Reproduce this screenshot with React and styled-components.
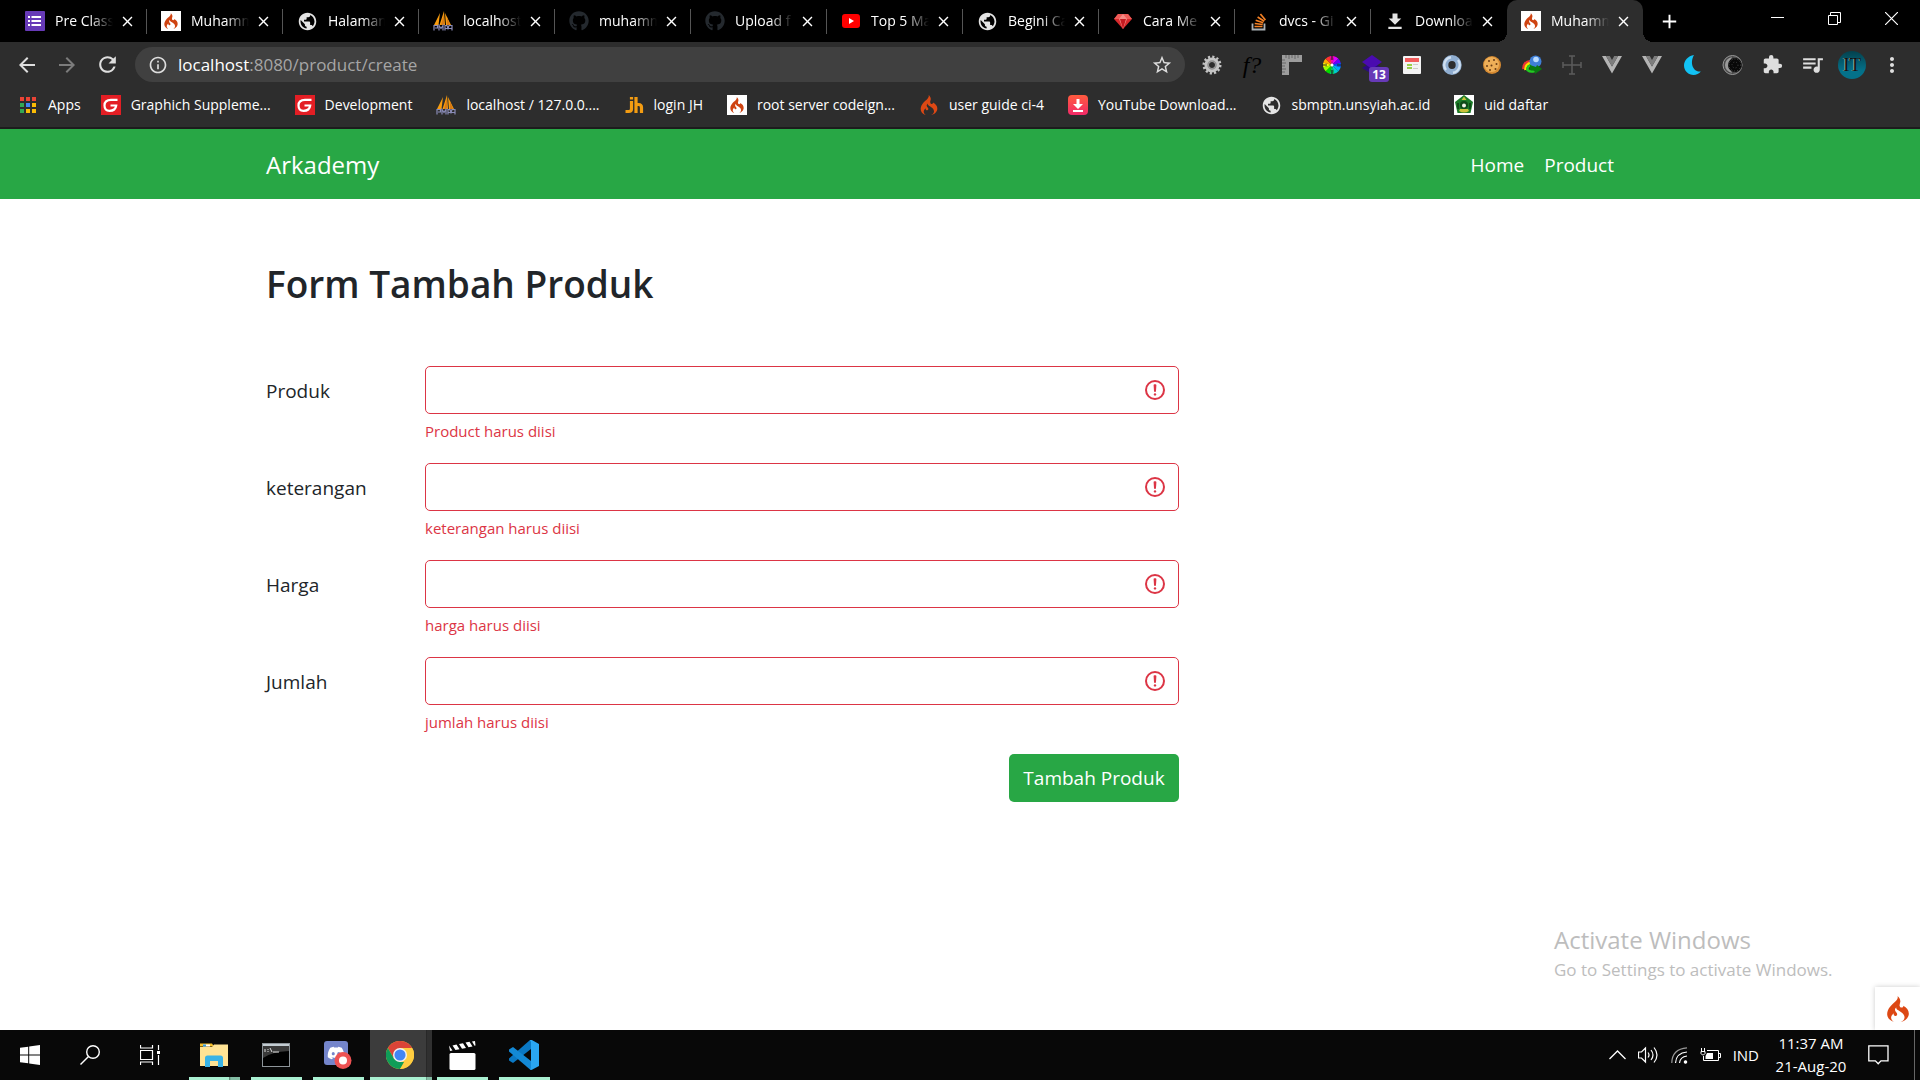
import React from "react";
import styled, { createGlobalStyle, css } from "styled-components";
import {
  MdPublic, MdExtension, MdQueueMusic, MdStarBorder, MdRefresh, MdArrowBack,
  MdArrowForward, MdInfoOutline, MdMoreVert, MdClose, MdAdd,
} from "react-icons/md";
import { FaGithub, FaDiscord } from "react-icons/fa";
import { SiCodeigniter } from "react-icons/si";

const GlobalStyle = createGlobalStyle`
  *, *::before, *::after { box-sizing: border-box; }
  body {
    margin: 0;
    background: #fff;
    color: #212529;
    font-family: "Open Sans", "Noto Sans", sans-serif;
  }
  button, input { font: inherit; }
  svg { display: block; flex: none; }
`;

/* ---------- shell ---------- */

const Screen = styled.div`
  display: flex;
  flex-direction: column;
  min-height: 100vh;
`;

const plainButton = css`
  display: flex;
  align-items: center;
  justify-content: center;
  margin: 0;
  padding: 0;
  border: 0;
  background: none;
  color: inherit;
`;

const row = css`
  display: flex;
  align-items: center;
`;

/* ---------- browser chrome ---------- */

const TabStrip = styled.div`
  ${row}
  height: 42px;
  padding-left: 11px;
  background: #000;
  color: #fff;
`;

const Tab = styled.div`
  ${row}
  position: relative;
  width: 136px;
  height: 42px;
  padding: 0 10px 0 14px;
  background: ${(p) => (p.$active ? "#2d2d2d" : "none")};
  border-radius: 10px 10px 0 0;

  &::after {
    content: "";
    position: absolute;
    right: 0;
    top: 9px;
    width: 1px;
    height: 25px;
    background: ${(p) => (p.$divider ? "#555" : "none")};
  }
`;

const TabFoot = styled.span`
  position: absolute;
  bottom: 0;
  width: 10px;
  height: 10px;
  ${(p) => (p.$side === "left"
    ? "left: -10px; background: radial-gradient(circle at 0 0, transparent 10px, #2d2d2d 10px);"
    : "right: -10px; background: radial-gradient(circle at 100% 0, transparent 10px, #2d2d2d 10px);")}
`;

const TabTitle = styled.button`
  ${plainButton}
  flex: 1;
  min-width: 0;
  justify-content: flex-start;
  gap: 10px;
`;

const TabText = styled.span`
  flex: 1;
  min-width: 0;
  overflow: hidden;
  white-space: nowrap;
  text-align: left;
  font-size: 14px;
  line-height: 20px;
  mask-image: linear-gradient(to right, #000 60%, transparent 100%);
`;

const TabClose = styled.button`
  ${plainButton}
  width: 20px;
  height: 20px;
  margin-left: 4px;
`;

const NewTab = styled.button`
  ${plainButton}
  width: 36px;
  height: 42px;
  margin-left: 8px;
`;

const WindowControls = styled.div`
  display: flex;
  align-self: flex-start;
  margin-left: auto;
`;

const WindowButton = styled.button`
  ${plainButton}
  width: 57px;
  height: 37px;
`;

const Toolbar = styled.div`
  ${row}
  height: 45px;
  padding: 0 8px 0 7px;
  background: #2d2d2d;
  color: #dedede;
`;

const ToolButton = styled.button`
  ${plainButton}
  position: relative;
  width: 40px;
  height: 40px;
  color: ${(p) => (p.$dim ? "#7c7c7c" : "inherit")};
`;

const AddressBar = styled.form`
  ${row}
  flex: 1;
  gap: 10px;
  height: 35px;
  margin: 0 7px 0 8px;
  padding: 0 12px 0 13px;
  border-radius: 18px;
  background: #404040;
`;

const Address = styled.div`
  ${row}
  flex: 1;
  font-size: 17px;
  color: #fff;
`;

const AddressInput = styled.input`
  flex: 1;
  min-width: 0;
  height: 30px;
  padding: 0;
  border: 0;
  outline: 0;
  background: none;
  color: #a6a6a6;
`;

const Counter = styled.span`
  position: absolute;
  left: 17px;
  top: 22px;
  width: 20px;
  height: 15px;
  border-radius: 3px;
  background: #673ab7;
  color: #fff;
  font-size: 12px;
  font-weight: 700;
  line-height: 15px;
  text-align: center;
`;

const Bookmarks = styled.nav`
  ${row}
  gap: 24px;
  height: 42px;
  padding: 0 19px 4px;
  background: #2d2d2d;
  border-bottom: 2px solid #1c1c1c;
`;

const Bookmark = styled.a`
  ${row}
  gap: 10px;
  color: #fff;
  font-size: 14px;
  line-height: 20px;
  white-space: nowrap;
  text-decoration: none;

  &:first-child {
    margin-right: -4px;
  }
`;

/* ---------- page ---------- */

const Page = styled.div`
  position: relative;
  flex: 1;
`;

const Navbar = styled.header`
  background: #28a745;
`;

const Container = styled.div`
  max-width: 1424px;
  margin: 0 auto;
  padding: 0 18px;
`;

const NavRow = styled(Container)`
  ${row}
  justify-content: space-between;
  height: 70px;
  padding-top: 2px;
`;

const Brand = styled.a`
  color: #fff;
  font-size: 24px;
  line-height: 38px;
  text-decoration: none;
`;

const NavLinks = styled.nav`
  display: flex;
  margin-right: 30px;
`;

const NavLink = styled.a`
  padding: 0 10px;
  color: #fff;
  font-size: 19px;
  line-height: 30px;
  text-decoration: none;
`;

const Title = styled.h2`
  margin: 61px 0 58px;
  font-size: 37px;
  font-weight: 600;
  line-height: 48px;
`;

const ProductForm = styled.form`
  display: flex;
  flex-direction: column;
  gap: 20px;
  max-width: 913px;
`;

const Field = styled.div`
  display: grid;
  grid-template-columns: 159px 1fr;
`;

const Label = styled.label`
  font-size: 19px;
  line-height: 50px;
`;

const InputWrap = styled.div`
  position: relative;
  height: 48px;

  svg {
    position: absolute;
    right: 12px;
    top: 12px;
  }
`;

const Input = styled.input`
  display: block;
  width: 100%;
  height: 48px;
  padding: 7px 48px 7px 15px;
  border: 1px solid #dc3545;
  border-radius: 5px;
  background: #fff;
  color: #495057;
  font-size: 19px;
`;

const Feedback = styled.div`
  margin-top: 5px;
  color: #dc3545;
  font-size: 15px;
  line-height: 24px;
`;

const Submit = styled.button`
  align-self: flex-end;
  width: 170px;
  height: 48px;
  padding: 0;
  border: 0;
  border-radius: 5px;
  background: #28a745;
  color: #fff;
  font-size: 19px;
`;

const Watermark = styled.div`
  position: absolute;
  right: 82px;
  bottom: 48px;
  width: 284px;
  color: #bdbdbd;
  font-size: 17px;
  line-height: 24px;
  white-space: nowrap;

  strong {
    display: block;
    font-size: 24px;
    font-weight: 400;
    line-height: 36px;
  }
`;

const DebugBadge = styled.button`
  ${plainButton}
  position: absolute;
  right: 0;
  bottom: 0;
  width: 45px;
  height: 43px;
  background: #fff;
  box-shadow: 0 0 5px #ccc;
  clip-path: inset(-6px 0 0 -6px);
  color: #dd4814;
`;

/* ---------- taskbar ---------- */

const Taskbar = styled.footer`
  ${row}
  height: 50px;
  background: #080808;
  color: #fff;
`;

const SystemButton = styled.button`
  ${plainButton}
  width: 60px;
  height: 50px;
`;

const Apps = styled.div`
  display: flex;
  margin-left: 4px;
`;

const AppButton = styled.button`
  ${plainButton}
  position: relative;
  width: 62px;
  height: 50px;
  padding-right: 2px;
  background: ${(p) => (p.$active
    ? "linear-gradient(to right, #3c3c3c 56px, #202020 56px, #303030 57px)" : "none")};

  &::after {
    content: "";
    position: absolute;
    left: ${(p) => (p.$active ? 0 : 5)}px;
    right: ${(p) => (p.$active ? 0 : 6)}px;
    bottom: 0;
    height: 3px;
    background: ${(p) => (p.$stacked
    ? "linear-gradient(to right, #a9f0d1 calc(100% - 11px), #557a69 calc(100% - 11px), #83bda4 calc(100% - 9px))"
    : p.$active
      ? "linear-gradient(to right, #a9f0d1 56px, #557a69 56px, #83bda4 57px)"
      : "#a9f0d1")};
  }
`;

const Tray = styled.div`
  ${row}
  align-self: stretch;
  gap: 12px;
  margin-left: auto;
`;

const TrayButton = styled.button`
  ${plainButton}
  height: 50px;
  font-size: 15px;
`;

const Clock = styled.time`
  width: 80px;
  margin-right: 5px;
  font-size: 15px;
  line-height: 23px;
  text-align: center;
`;

const ShowDesktop = styled.button`
  ${plainButton}
  width: 6px;
  height: 50px;
  margin-left: 13px;
  border-left: 1px solid #666;
`;

/* ---------- drawings ---------- */

const FormsIcon = () => (
  <svg width="20" height="20" viewBox="0 0 20 20">
    <rect width="20" height="20" rx="1" fill="#673ab7" />
    <path d="M3 5h2v2H3zM6.500 5H16v2H6.500zM3 9h2v2H3zM6.500 9H16v2H6.500zM3 13h2v2H3zM6.500 13H16v2H6.500z" fill="#fff" />
  </svg>
);

const FlameTile = styled.span`
  ${row}
  justify-content: center;
  flex: none;
  width: 20px;
  height: 20px;
  background: #fff;
  color: #cf4311;
`;

const Flame = () => <FlameTile><SiCodeigniter size={16} /></FlameTile>;

const SailIcon = () => (
  <svg width="20" height="20" viewBox="0 0 20 20">
    <path d="M1 14 7 2 5.500 14zM6.500 14 11 0l1 14zM13 14l-1-12 6 12z" fill="#f89c0e" />
    <path d="M8 14 11 3v11zM14 14V6l3 8z" fill="#d87a14" />
    <path d="M1 19.500v-5h3.500v2.500H2M6 19.500v-5l2 3 2-3v5M12 19.500v-5h2l1 3 1-3h3v5M12 17.500h7" stroke="#8a8cb8" strokeWidth="1.200" fill="none" />
  </svg>
);

const YoutubeIcon = () => (
  <svg width="20" height="20" viewBox="0 0 20 20">
    <rect x="1" y="3" width="18" height="14" rx="3" fill="#f00" />
    <path d="m8 7 5 3-5 3z" fill="#fff" />
  </svg>
);

const GemIcon = () => (
  <svg width="20" height="20" viewBox="0 0 20 20">
    <path d="M5 3h10l4 5-9 10L1 8z" fill="#d8292c" />
    <path d="M5 3h10l4 5H1z" fill="#ee5c58" />
    <path d="m6 8 4-5 4 5zM6 8h8l-4 10z" fill="#f58a84" />
    <path d="m7 8 3 10 3-10z" fill="#c41a20" />
  </svg>
);

const StackIcon = () => (
  <svg width="20" height="20" viewBox="0 0 20 20" fill="none">
    <path d="M3.500 12.500v6h12v-6" stroke="#aab1b6" strokeWidth="1.800" />
    <path d="M5.500 15.500h8M5.700 12.500l8 1M6.700 9.200l7.500 2.600M8.600 6l6.600 4.200M11.400 3l5 6" stroke="#f48024" strokeWidth="1.700" />
  </svg>
);

const DownloadIcon = () => (
  <svg width="20" height="20" viewBox="0 0 24 24" fill="#e4e4e4">
    <path d="M19.500 9H15V3H9v6H4.500l7.500 7.500zM4 19v2.500h16V19z" />
  </svg>
);

const AppsIcon = () => (
  <svg width="19" height="19" viewBox="0 0 19 19">
    {["#ea4335", "#ea4335", "#ea4335", "#34a853", "#4285f4", "#fbbc05", "#34a853", "#fbbc05", "#fbbc05"].map((c, i) => (
      <rect key={i} x={1 + (i % 3) * 6} y={1 + Math.floor(i / 3) * 6} width="4" height="4" fill={c} />
    ))}
  </svg>
);

const RedGIcon = () => (
  <svg width="20" height="20" viewBox="0 0 20 20">
    <rect width="20" height="20" fill="#e31e24" />
    <path d="M16.500 4.800H10C5.500 4.800 3.500 7 3.500 10.500S5.500 15.800 8.500 15.800c4 0 6.300-2 6.700-5.300h-5.700" stroke="#fff" strokeWidth="2.200" fill="none" />
  </svg>
);

const JhIcon = () => (
  <svg width="20" height="20" viewBox="0 0 20 20" fill="none" stroke="#f39c12" strokeWidth="3.200">
    <path d="M1.500 16.500h3.200q2.800 0 2.800-2.500V6M7.500 2v2.600M12 2v16M12 9.500h2.500q3 0 3 3V18" />
  </svg>
);

const SaverIcon = () => (
  <svg width="20" height="20" viewBox="0 0 20 20">
    <defs>
      <linearGradient id="saver" x2="0" y2="1">
        <stop stopColor="#ff5b3e" /><stop offset="1" stopColor="#f22a68" />
      </linearGradient>
    </defs>
    <rect width="20" height="20" rx="4" fill="url(#saver)" />
    <path d="M8.500 4h3v5H15l-5 5-5-5h3.500zM5 15h10v2H5z" fill="#fff" />
  </svg>
);

const CrestIcon = () => (
  <svg width="20" height="20" viewBox="0 0 20 20">
    <rect width="20" height="20" fill="#fff" />
    <path d="m10 0 9 7-2.500 11h-13L1 7z" fill="#1c7a28" />
    <path d="M10 1.500 12.500 5h-5zM5 16q5 3 10 0l-1-2H6z" fill="#c9c23a" />
    <circle cx="10" cy="10" r="4" fill="#0f4a18" />
    <circle cx="10" cy="10.500" r="2" fill="#f2f2e8" />
    <path d="M4 8v6M16 8v6" stroke="#0c3f12" strokeWidth="1.500" />
  </svg>
);

const GearIcon = () => (
  <svg width="20" height="20" viewBox="0 0 20 20" fill="none">
    <circle cx="10" cy="10" r="8" stroke="#c4c4c4" strokeWidth="3" strokeDasharray="2.100 2.089" />
    <circle cx="10" cy="10" r="5.300" stroke="#c4c4c4" strokeWidth="4.600" />
    <circle cx="10" cy="10" r="4" stroke="#8d8d8d" strokeWidth="1.500" />
  </svg>
);

const Formula = styled.span`
  color: #000;
  font-family: "Liberation Serif", serif;
  font-size: 24px;
  font-style: italic;
  line-height: 24px;
`;

const RulerIcon = () => (
  <svg width="20" height="20" viewBox="0 0 20 20">
    <path d="M0 0h20v7H7v13H0z" fill="#9c9c9c" />
    <path d="M4 0v3M7 0v4M10 0v3M13 0v4M16 0v3M0 5h3M0 8h4M0 11h3M0 14h4M0 17h3" stroke="#666" />
  </svg>
);

const wheel = ["#ff0", "#fa0", "#f33", "#f0a", "#d0f", "#60f", "#05f", "#0af", "#0cc", "#0c6", "#0d0", "#9f0"];
const WheelIcon = () => (
  <svg width="20" height="20" viewBox="-10 -10 20 20">
    {wheel.map((c, i) => (
      <path key={c} d="M0 0V-9A9 9 0 0 1 4.500-7.800z" fill={c} transform={`rotate(${i * 30 - 105})`} />
    ))}
    <path d="M0-10v5M0 10V5M-10 0h5M10 0H5" stroke="#222" strokeWidth="1.200" />
    <circle r="1.500" fill="#fff" />
  </svg>
);

const LayersIcon = () => (
  <svg width="22" height="20" viewBox="0 0 22 20">
    <path d="m1 13 10-6 10 6-10 6z" fill="#2c0a80" />
    <path d="m1 7 10-7 10 7-10 7z" fill="#4a0bb0" />
  </svg>
);

const NoteIcon = () => (
  <svg width="18" height="18" viewBox="0 0 18 18">
    <rect width="18" height="18" rx="1" fill="#f4f4f4" />
    <path d="M2 2h14v4H2z" fill="#f25c5c" />
    <path d="M4 8h5v2H4zM4 11h5v2H4z" fill="#9ad04a" />
    <path d="M10 8h5v1h-5zM10 12h5v1h-5z" fill="#ccc" />
  </svg>
);

const RingIcon = () => (
  <svg width="20" height="20" viewBox="0 0 20 20" fill="none">
    <ellipse cx="10" cy="10" rx="6.700" ry="7" stroke="#8fadd0" strokeWidth="6" />
    <path d="M4 15A8 8 0 0 1 9 2.200M16 5a8 8 0 0 1-5 12.800" stroke="#cfdff0" strokeWidth="2.400" />
  </svg>
);

const CookieIcon = () => (
  <svg width="20" height="20" viewBox="0 0 20 20">
    <circle cx="10" cy="10" r="9" fill="#d58a32" />
    <circle cx="9.500" cy="9.500" r="7.500" fill="#eeaf58" />
    <g fill="#6b3c14">
      <circle cx="7" cy="6" r="1" /><circle cx="12" cy="5" r="1" /><circle cx="14.500" cy="9" r="1" />
      <circle cx="9.500" cy="10.500" r="1" /><circle cx="5" cy="11" r="1" /><circle cx="8" cy="15" r="1" /><circle cx="13.500" cy="14" r="1" />
    </g>
  </svg>
);

const IdmIcon = () => (
  <svg width="20" height="20" viewBox="0 0 20 20" fill="none">
    <path d="M9 6C3 6.500 1 10 1.500 14" stroke="#e33" strokeWidth="2.500" />
    <path d="M10 8C5 8 3 11 3.500 15" stroke="#fd0" strokeWidth="2.500" />
    <path d="M10 10C7 10 5 12 5.500 15q3 2.500 7 1" stroke="#2c2" strokeWidth="2.500" />
    <circle cx="13.500" cy="6.500" r="6" fill="#3f7fd8" />
    <circle cx="14" cy="4.500" r="2.800" fill="#b9dbff" />
    <path d="m8 10 6 2 1-2 5 4-7 5v-3l-5-1z" fill="#0a7a10" />
  </svg>
);

const CrossIcon = () => (
  <svg width="20" height="20" viewBox="0 0 20 20" fill="none" stroke="#5c5c5c" strokeWidth="1.500">
    <path d="M10 1v18M1 10h18M7 1h6M7 19h6M1 7v6M19 7v6" />
  </svg>
);

const VueIcon = () => (
  <svg width="20" height="18" viewBox="0 0 20 18">
    <path d="M0 0h4l6 10.400L16 0h4L10 17.500z" fill="#b4b4b4" />
    <path d="M4 0h3.800L10 3.900 12.200 0H16l-6 10.400z" fill="#7d7d7d" />
  </svg>
);

const MoonIcon = () => (
  <svg width="20" height="20" viewBox="0 0 20 20" fill="#12c2f4">
    <path d="M12 0C6 1 2 5.500 2 10.500 2 16 6.500 20 11.500 20c3 0 5.500-1.200 7.300-3.500C12 17.500 7 9 12 0z" />
  </svg>
);

const EclipseIcon = () => (
  <svg width="21" height="20" viewBox="0 0 21 20">
    <circle cx="10.500" cy="10" r="9.500" fill="#4a4a4a" stroke="#9a9a9a" />
    <path d="M10 2Q5 10 10 18 3 16 3 10t7-8z" fill="#9a9a9a" />
    <circle cx="13" cy="10" r="7" fill="#080808" />
    <circle cx="13" cy="10" r="6" fill="none" stroke="#555" strokeDasharray="1 2" />
    <circle cx="13" cy="10" r="3" fill="none" stroke="#444" strokeDasharray="1 2" />
  </svg>
);

const Avatar = styled.span`
  ${row}
  justify-content: center;
  width: 28px;
  height: 28px;
  border-radius: 50%;
  background: linear-gradient(#04414d, #04718a 70%);
  color: #0b1214;
  font-family: "Liberation Serif", serif;
  font-size: 19px;
  text-shadow: -1px 0 #9aa;
`;

const MinimizeIcon = () => <svg width="13" height="13"><path d="M0 5.500h13" stroke="#fff" /></svg>;
const RestoreIcon = () => (
  <svg width="13" height="13" fill="none" stroke="#fff"><path d="M.5 3.500h9v9h-9zM2.500 3.500v-3h10v10h-3" /></svg>
);
const CloseIcon = () => <svg width="13" height="13"><path d="m0 0 13 13M13 0 0 13" stroke="#fff" strokeWidth="1.200" /></svg>;

const AlertIcon = () => (
  <svg width="24" height="24" viewBox="0 0 12 12" fill="none" stroke="#dc3545">
    <circle cx="6" cy="6" r="4.500" />
    <path strokeLinejoin="round" d="M5.800 3.600h.4L6 6.500z" />
    <circle cx="6" cy="8.200" r=".6" fill="#dc3545" stroke="none" />
  </svg>
);

const WindowsIcon = () => (
  <svg width="20" height="20" viewBox="0 0 20 20" fill="#fff">
    <path d="m0 2.800 8.200-1.100v7.800H0zM9.200 1.500 20 0v9.500H9.200zM0 10.500h8.200v7.800L0 17.200zM9.200 10.500H20V20L9.200 18.500z" />
  </svg>
);
const SearchIcon = () => (
  <svg width="20" height="20" viewBox="0 0 20 20" fill="none" stroke="#fff" strokeWidth="1.400">
    <circle cx="13" cy="7" r="6.300" /><path d="M8.500 11.500.5 19.500" />
  </svg>
);
const TaskViewIcon = () => (
  <svg width="20" height="20" viewBox="0 0 20 20" fill="none" stroke="#fff" strokeWidth="1.200">
    <path d="M.5 5.500h12v9H.5zM.5 0v3h12V0M.5 20v-3h12v3M18.500 0v5M18.500 10v10" />
    <path d="M17 6h3v3h-3z" fill="#fff" stroke="none" />
  </svg>
);
const FolderIcon = () => (
  <svg width="28" height="28" viewBox="0 0 28 28">
    <path d="M0 2.500h12l2 3H0z" fill="#f5bf2b" /><path d="M3 3.500h7v2H3z" fill="#fff" /><path d="M3 3.500h3v2H3z" fill="#2f9be0" />
    <path d="M0 6h12l2-2.500h14V25H0z" fill="#ffe394" />
    <path d="M5 26V17q0-2.500 2.500-2.500h13Q23 14.500 23 17v9h-5v-6h-8v6z" fill="#39b3e6" />
  </svg>
);
const TerminalIcon = () => (
  <svg width="28" height="24" viewBox="0 0 28 24">
    <rect x=".5" y=".5" width="27" height="23" fill="#000" stroke="#8d9499" />
    <path d="M1 1h26v2H1z" fill="#c3ccd2" /><path d="M1 3h26v5Q9 9 1 15z" fill="#3a3a3a" />
    <path d="M3 6v3M6 6v1M6 8v1M8 5l2 4M11 9h6" stroke="#ddd" />
  </svg>
);
const DiscordTile = () => (
  <svg width="28" height="28" viewBox="0 0 28 28">
    <rect width="24" height="24" rx="3" fill="#7485cb" />
    <g color="#fff"><FaDiscord x="3" y="3" size={18} /></g>
    <circle cx="19" cy="19.500" r="8.500" fill="#ee5253" /><circle cx="19" cy="19.500" r="4" fill="#fff" />
  </svg>
);
const ChromeIcon = () => (
  <svg width="28" height="28" viewBox="0 0 48 48">
    <circle cx="24" cy="24" r="24" fill="#fcc934" />
    <path d="M3.200 12A24 24 0 0 1 44.800 12H24L13.600 30z" fill="#db4437" />
    <path d="M3.200 12 13.600 30 24 36h10.400L24 48A24 24 0 0 1 3.200 12z" fill="#0f9d58" />
    <path d="M24 12h20.800A24 24 0 0 1 24 48l10.400-18z" fill="#ffcd40" />
    <circle cx="24" cy="24" r="12" fill="#f1f1f1" /><circle cx="24" cy="24" r="9.500" fill="#4285f4" />
  </svg>
);
const ClapperIcon = () => (
  <svg width="27" height="29" viewBox="0 0 27 29" fill="#fff">
    <rect x=".5" y="12" width="26" height="17" rx="1.500" />
    <path d="m0 4.500 3.500 5-2.500.4zM3.500 4.500l4-.9 3 4.700-4 .8zM10 3.100l4-.9 3 4.700-4 .8zM16.500 1.600l4-.9 3 4.700-4 .8zM23 .4l3-.4.5 4.500-1 .3z" />
  </svg>
);
const CodeIcon = () => (
  <svg width="30" height="30" viewBox="0 0 30 30">
    <path d="M22 0v9L4 23 0 20.500v-2L21 0z" fill="#0a78c4" />
    <path d="M0 11.500v-2L4 7l18 14v9l-1-.5z" fill="#1389d6" />
    <path d="m21 0 1.500-.2L30 4v22l-7.500 4-1.500-.8 1-1.200V2z" fill="#2aa6f2" />
  </svg>
);

const ChevronIcon = () => <svg width="17" height="10" fill="none" stroke="#fff" strokeWidth="1.300"><path d="m.5 9 8-8 8 8" /></svg>;
const SpeakerIcon = () => (
  <svg width="21" height="18" fill="none" stroke="#fff" strokeWidth="1.200">
    <path d="M.5 6h3l4-4v14l-4-4h-3zM10 6.500q2 2.500 0 5M13 4q4 5 0 10M16 1.500q6 7.500 0 15" />
  </svg>
);
const WifiIcon = () => (
  <svg width="17" height="17" fill="none" stroke="#fff" strokeWidth="1.200">
    <path d="M.8 16Q1 2 16 .8" stroke="#999" /><path d="M4.500 16Q5 6 16 5M8.500 16Q9 10 16 9" />
    <circle cx="14.500" cy="15" r="1.200" fill="#fff" />
  </svg>
);
const BatteryIcon = () => (
  <svg width="21" height="14" fill="none" stroke="#fff">
    <path d="M7 2.500h11.500v10h-15V8M19 5.500h1.500v4H19M1.500 0v3M4.500 0v3" />
    <path d="M1 3.500h4v2L3.500 7h-1L1 5.500z" />
    <path d="M7 5h6v6H5.500V8z" fill="#fff" stroke="none" />
  </svg>
);
const ActionIcon = () => (
  <svg width="21" height="20" fill="none" stroke="#fff" strokeWidth="1.300"><path d="M.8.800h19.200v15h-7l-2.800 3-2.800-3H.8z" /></svg>
);

/* ---------- content ---------- */

const tabs = [
  ["Pre Class", <FormsIcon />],
  ["Muhamm", <Flame />],
  ["Halaman", <MdPublic size={21} color="#e4e4e4" />],
  ["localhost", <SailIcon />],
  ["muhamm", <FaGithub size={20} color="#24292e" />],
  ["Upload f", <FaGithub size={20} color="#24292e" />],
  ["Top 5 Ma", <YoutubeIcon />],
  ["Begini Ca", <MdPublic size={21} color="#e4e4e4" />],
  ["Cara Me", <GemIcon />],
  ["dvcs - Gi", <StackIcon />],
  ["Downloa", <DownloadIcon />],
  ["Muhamm", <Flame />],
];

const extensions = [
  ["Settings", <GearIcon />],
  ["Font finder", <Formula>f?</Formula>],
  ["Ruler", <RulerIcon />],
  ["Colours", <WheelIcon />],
  ["Layers", <><LayersIcon /><Counter>13</Counter></>],
  ["Notes", <NoteIcon />],
  ["Ring", <RingIcon />],
  ["Cookies", <CookieIcon />],
  ["Downloads", <IdmIcon />],
  ["Crosshair", <CrossIcon />],
  ["Vue devtools", <VueIcon />],
  ["Vue devtools beta", <VueIcon />],
  ["Night mode", <MoonIcon />],
  ["Eclipse", <EclipseIcon />],
  ["Extensions", <MdExtension size={21} />],
  ["Media", <MdQueueMusic size={25} />],
  ["Profile", <Avatar>IT</Avatar>],
  ["Menu", <MdMoreVert size={24} />],
];

const bookmarks = [
  ["Apps", <AppsIcon />],
  ["Graphich Suppleme...", <RedGIcon />],
  ["Development", <RedGIcon />],
  ["localhost / 127.0.0....", <SailIcon />],
  ["login JH", <JhIcon />],
  ["root server codeign...", <Flame />],
  ["user guide ci-4", <SiCodeigniter size={20} color="#dd4814" />],
  ["YouTube Download...", <SaverIcon />],
  ["sbmptn.unsyiah.ac.id", <MdPublic size={21} color="#e4e4e4" />],
  ["uid daftar", <CrestIcon />],
];

const fields = [
  ["produk", "Produk", "Product harus diisi"],
  ["keterangan", "keterangan", "keterangan harus diisi"],
  ["harga", "Harga", "harga harus diisi"],
  ["jumlah", "Jumlah", "jumlah harus diisi"],
];

const apps = [
  ["File Explorer", <FolderIcon />, false, true],
  ["Command Prompt", <TerminalIcon />],
  ["Discord", <DiscordTile />],
  ["Chrome", <ChromeIcon />, true],
  ["Video editor", <ClapperIcon />],
  ["Code", <CodeIcon />],
];

export default function App() {
  return (
    <Screen>
      <GlobalStyle />
      <TabStrip>
        {tabs.map(([text, icon], i) => {
          const active = i === tabs.length - 1;
          return (
            <Tab key={i} $active={active} $divider={i < tabs.length - 2}>
              {active && <><TabFoot $side="left" /><TabFoot $side="right" /></>}
              <TabTitle>{icon}<TabText>{text}</TabText></TabTitle>
              <TabClose aria-label="Close tab"><MdClose size={17} /></TabClose>
            </Tab>
          );
        })}
        <NewTab aria-label="New tab"><MdAdd size={23} /></NewTab>
        <WindowControls>
          <WindowButton aria-label="Minimize"><MinimizeIcon /></WindowButton>
          <WindowButton aria-label="Restore"><RestoreIcon /></WindowButton>
          <WindowButton aria-label="Close"><CloseIcon /></WindowButton>
        </WindowControls>
      </TabStrip>

      <Toolbar>
        <ToolButton aria-label="Back"><MdArrowBack size={24} /></ToolButton>
        <ToolButton aria-label="Forward" $dim><MdArrowForward size={24} /></ToolButton>
        <ToolButton aria-label="Reload"><MdRefresh size={25} /></ToolButton>
        <AddressBar>
          <MdInfoOutline size={20} />
          <Address>
            <label htmlFor="address">localhost</label>
            <AddressInput id="address" defaultValue=":8080/product/create" />
          </Address>
          <MdStarBorder size={22} />
        </AddressBar>
        {extensions.map(([name, icon]) => (
          <ToolButton key={name} type="button" aria-label={name}>{icon}</ToolButton>
        ))}
      </Toolbar>

      <Bookmarks>
        {bookmarks.map(([text, icon]) => (
          <Bookmark key={text} href="#">{icon}{text}</Bookmark>
        ))}
      </Bookmarks>

      <Page>
        <Navbar>
          <NavRow>
            <Brand href="#">Arkademy</Brand>
            <NavLinks>
              <NavLink href="#">Home</NavLink>
              <NavLink href="#">Product</NavLink>
            </NavLinks>
          </NavRow>
        </Navbar>
        <Container as="main">
          <Title>Form Tambah Produk</Title>
          <ProductForm>
            {fields.map(([id, label, message]) => (
              <Field key={id}>
                <Label htmlFor={id}>{label}</Label>
                <div>
                  <InputWrap><Input id={id} /><AlertIcon /></InputWrap>
                  <Feedback>{message}</Feedback>
                </div>
              </Field>
            ))}
            <Submit type="button">Tambah Produk</Submit>
          </ProductForm>
        </Container>
        <Watermark><strong>Activate Windows</strong>Go to Settings to activate Windows.</Watermark>
        <DebugBadge aria-label="Debug toolbar"><SiCodeigniter size={26} /></DebugBadge>
      </Page>

      <Taskbar>
        <SystemButton aria-label="Start"><WindowsIcon /></SystemButton>
        <SystemButton aria-label="Search"><SearchIcon /></SystemButton>
        <SystemButton aria-label="Task view"><TaskViewIcon /></SystemButton>
        <Apps>
          {apps.map(([name, icon, active, stacked]) => (
            <AppButton key={name} aria-label={name} $active={active} $stacked={stacked}>{icon}</AppButton>
          ))}
        </Apps>
        <Tray>
          <TrayButton aria-label="Hidden icons"><ChevronIcon /></TrayButton>
          <TrayButton aria-label="Volume"><SpeakerIcon /></TrayButton>
          <TrayButton aria-label="Network"><WifiIcon /></TrayButton>
          <TrayButton aria-label="Battery"><BatteryIcon /></TrayButton>
          <TrayButton>IND</TrayButton>
          <Clock>11:37 AM<br />21-Aug-20</Clock>
          <TrayButton aria-label="Notifications"><ActionIcon /></TrayButton>
          <ShowDesktop aria-label="Show desktop" />
        </Tray>
      </Taskbar>
    </Screen>
  );
}
